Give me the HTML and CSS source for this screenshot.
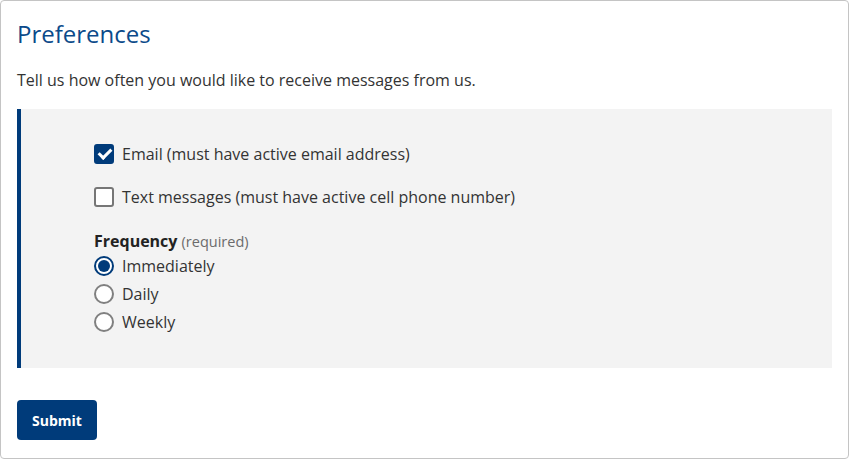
FILE: index.html
```html
<!DOCTYPE html>
<html lang="en">
<head>
    <meta charset="UTF-8">
    <title>Preferences</title>

    <link rel="stylesheet" href="styles.css">

</head>
<body>

<form class="card">
    <h2 class="title">Preferences</h2>
    <p class="intro">Tell us how often you would like to receive messages from us.</p>

    <div class="panel">
        <label class="check">
            <input type="checkbox" checked>
            <span class="box"></span>
            <span>Email (must have active email address)</span>
        </label>
        <label class="check">
            <input type="checkbox">
            <span class="box"></span>
            <span>Text messages (must have active cell phone number)</span>
        </label>

        <div class="group">
            <div class="legend">Frequency <span class="req">(required)</span></div>
            <label class="radio">
                <input type="radio" name="freq" checked>
                <span class="dot"></span>
                <span>Immediately</span>
            </label>
            <label class="radio">
                <input type="radio" name="freq">
                <span class="dot"></span>
                <span>Daily</span>
            </label>
            <label class="radio">
                <input type="radio" name="freq">
                <span class="dot"></span>
                <span>Weekly</span>
            </label>
        </div>
    </div>

    <button type="button" class="submit">Submit</button>
</form>

</body>
</html>
```

FILE: styles.css
```css
* {
    margin: 0;
    padding: 0;
    box-sizing: border-box;
}

body {
    font-family: "Open Sans", "Liberation Sans", sans-serif;
    color: #333333;
    background: #ffffff;
}

.card {
    height: 459px;
    border: 1px solid #c4c4c4;
    border-radius: 4px;
    padding: 16px 16px 0;
    display: flex;
    flex-direction: column;
    align-items: flex-start;
}

.title {
    font-size: 24px;
    font-weight: 400;
    line-height: 34px;
    color: #0b4a8a;
}

.intro {
    margin-top: 17px;
    font-size: 16px;
    line-height: 24px;
}

.panel {
    width: 100%;
    margin-top: 17px;
    height: 259px;
    background: #f3f3f3;
    border-left: 4px solid #003b7a;
    padding: 33px 0 0 73px;
    font-size: 16px;
}

.check,
.radio {
    display: flex;
    align-items: center;
    gap: 8px;
    line-height: 24px;
}

.check + .check {
    margin-top: 19px;
}

.check input,
.radio input {
    display: none;
}

.box {
    width: 20px;
    height: 20px;
    border: 2px solid #767676;
    border-radius: 3px;
    background: #ffffff;
    position: relative;
}

.check input:checked + .box {
    background: #003b7a;
    border-color: #003b7a;
}

.check input:checked + .box::after {
    content: "";
    position: absolute;
    left: 5px;
    top: 0px;
    width: 5px;
    height: 10px;
    border: solid #ffffff;
    border-width: 0 3px 3px 0;
    transform: rotate(45deg);
}

.group {
    margin-top: 22px;
}

.legend {
    font-weight: 700;
    line-height: 20px;
    color: #222222;
}

.req {
    font-weight: 400;
    font-size: 14.5px;
    color: #6b6b6b;
}

.radio {
    line-height: 28px;
}

.dot {
    width: 20px;
    height: 20px;
    border: 2px solid #808080;
    border-radius: 50%;
    background: #ffffff;
    position: relative;
}

.radio input:checked + .dot {
    border-color: #003b7a;
}

.radio input:checked + .dot::after {
    content: "";
    position: absolute;
    left: 2px;
    top: 2px;
    width: 12px;
    height: 12px;
    border-radius: 50%;
    background: #003b7a;
}

.submit {
    margin-top: 32px;
    width: 80px;
    height: 40px;
    border: none;
    border-radius: 4px;
    background: #003b7a;
    color: #ffffff;
    font-family: "Open Sans", "Liberation Sans", sans-serif;
    font-size: 14px;
    font-weight: 700;
}
```
